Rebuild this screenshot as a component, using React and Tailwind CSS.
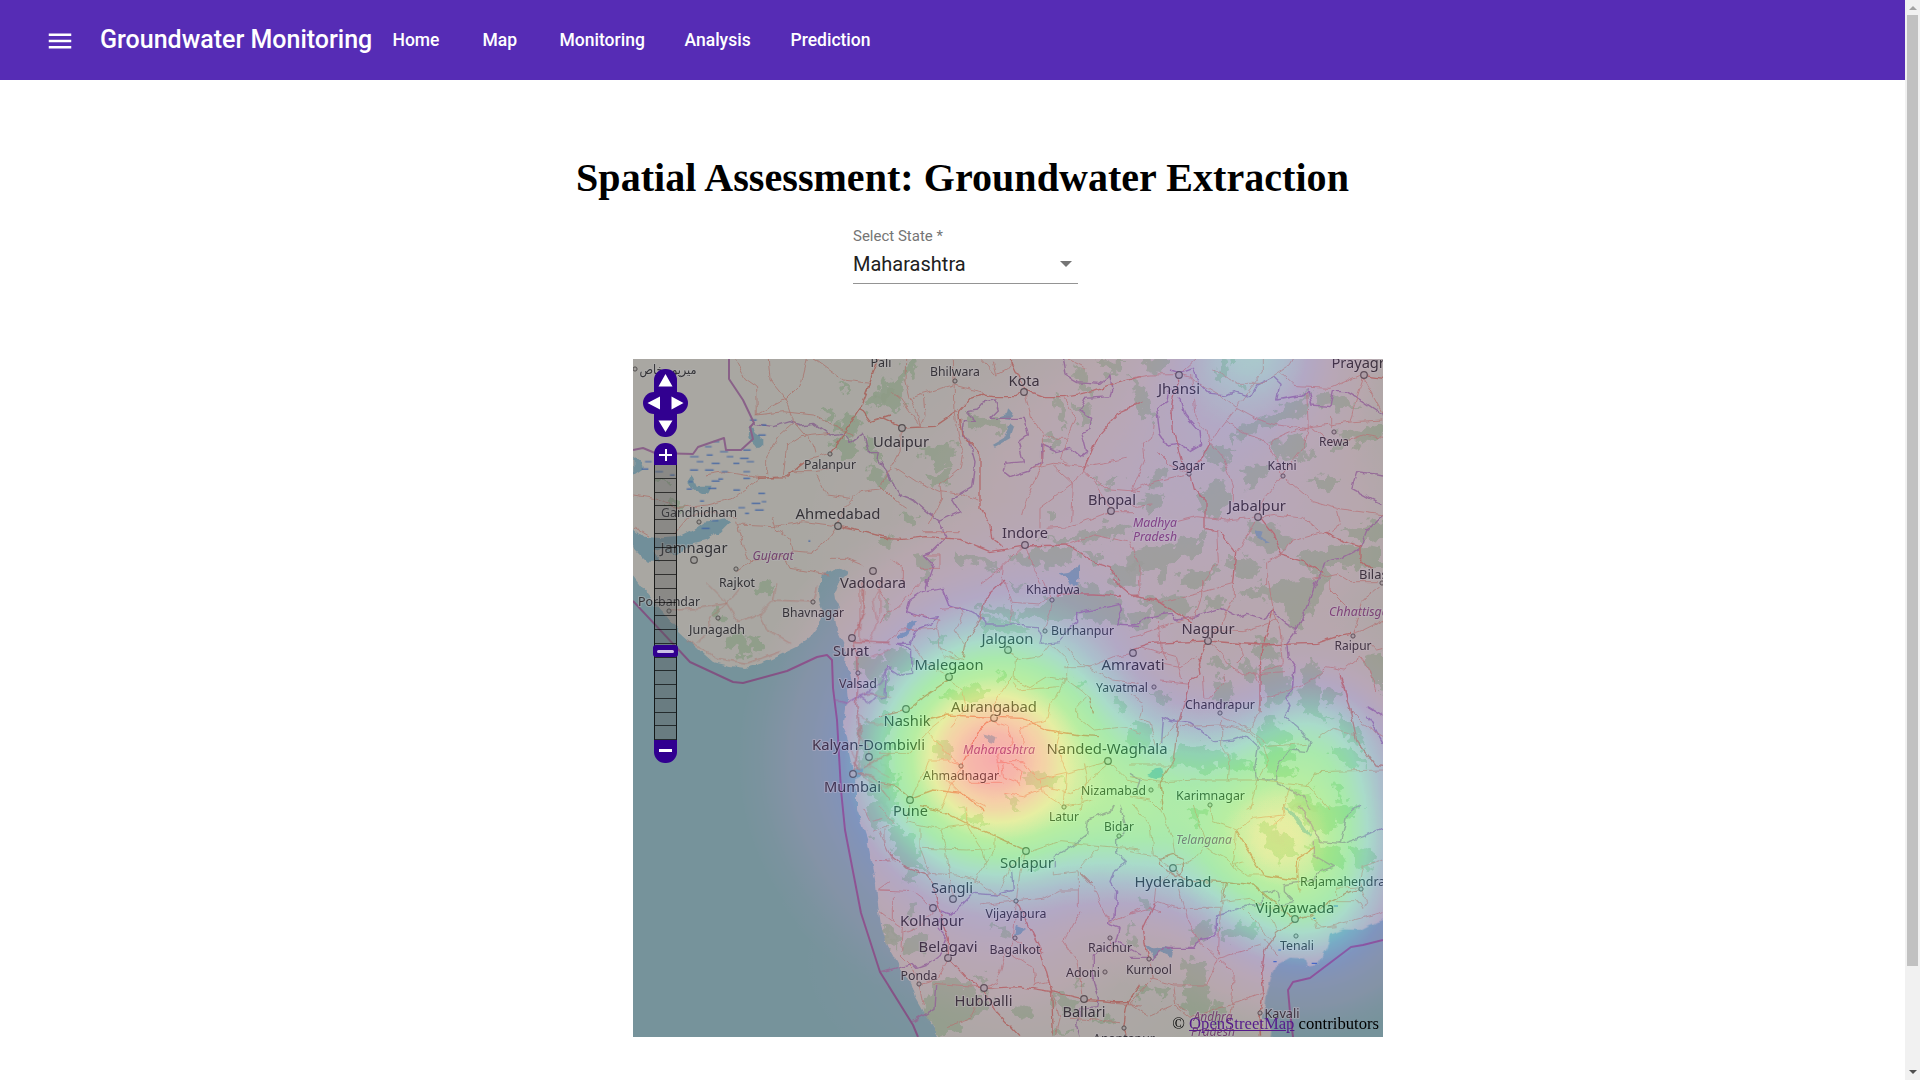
import React from "react";

const NAV = [
  ["Home", "w-[90px]"],
  ["Map", "w-[77px]"],
  ["Monitoring", "w-[125px]"],
  ["Analysis", "w-[106px]"],
  ["Prediction", "w-[90px]"],
];

/* name, centre x, baseline y, width, marker x, marker y */
const CITIES = [
  ["Udaipur", 901, 446.5, 56, 902, 428],
  ["Ahmedabad", 838, 519, 85, 838, 526],
  ["Jamnagar", 694, 553, 67, 694, 560],
  ["Vadodara", 873, 588, 66, 873, 571],
  ["Surat", 851, 656, 36, 852, 638],
  ["Kalyan-Dombivli", 868.5, 750, 113, 869, 757],
  ["Mumbai", 852.5, 792, 57, 853, 774],
  ["Kota", 1024, 385.5, 31, 1024, 392],
  ["Bhopal", 1112, 505, 48, 1111, 511],
  ["Indore", 1025, 538, 46, 1025, 545],
  ["Jhansi", 1179, 394, 42, 1179, 375],
  ["Prayagraj", 1364, 368, 65, 1364, 375],
  ["Jabalpur", 1257, 511, 58, 1258, 517],
  ["Jalgaon", 1007.5, 644, 52, 1008, 650],
  ["Malegaon", 949, 670, 69, 949, 677],
  ["Amravati", 1133, 670, 63, 1133, 653],
  ["Aurangabad", 994, 712, 86, 994, 718],
  ["Nashik", 907, 726, 47, 906, 709],
  ["Nanded-Waghala", 1107, 754, 121, 1108, 761],
  ["Pune", 910.5, 816, 35, 910, 800],
  ["Nagpur", 1208, 634, 53, 1208, 641],
  ["Solapur", 1027, 868, 54, 1026, 851],
  ["Sangli", 952, 893, 42, 953, 899],
  ["Kolhapur", 932, 926, 64, 933, 908],
  ["Belagavi", 948, 952, 59, 948, 958],
  ["Hubballi", 983.5, 1006, 58, 984, 988],
  ["Ballari", 1084, 1017, 43, 1084, 999],
  ["Hyderabad", 1173, 887, 77, 1173, 868],
  ["Vijayawada", 1295, 913, 79, 1295, 919],
];

const TOWNS = [
  ["ميرپور خاص", 668, 374, 57, 635, 369],
  ["Pali", 881, 367, 21, 881, 350],
  ["Palanpur", 830, 469, 52, 830, 454],
  ["Gandhidham", 699, 517, 76, 699, 522],
  ["Rajkot", 737, 587, 36, 736, 569],
  ["Porbandar", 669, 606, 62, 669, 611],
  ["Junagadh", 717, 634, 56, 718, 618],
  ["Bhavnagar", 813, 617, 62, 813, 602],
  ["Valsad", 858, 688, 38, 858, 673],
  ["Bhilwara", 955, 376, 50, 955, 381],
  ["Rewa", 1334, 445.5, 30, 1334, 432],
  ["Sagar", 1188.5, 470, 33, 1189, 474],
  ["Katni", 1282, 470, 29, 1283, 476],
  ["Bilaspur", 1384, 579, 50, 1382, 583],
  ["Khandwa", 1053, 594, 54, 1052, 600],
  ["Burhanpur", 1082.5, 635, 63, 1045, 631],
  ["Yavatmal", 1122, 691.5, 52, 1154, 687],
  ["Ahmadnagar", 961, 780, 76, 961, 766],
  ["Nizamabad", 1113.5, 795, 65, 1151, 790],
  ["Latur", 1064, 821, 30, 1064, 807],
  ["Raipur", 1353, 650, 37, 1353, 636],
  ["Chandrapur", 1220, 709, 70, 1220, 713],
  ["Karimnagar", 1210.5, 800, 69, 1210, 805],
  ["Bidar", 1119, 831, 30, 1119, 836],
  ["Vijayapura", 1016, 918, 61, 1016, 901],
  ["Bagalkot", 1015, 954, 51, 1015, 938],
  ["Raichur", 1110, 952, 44, 1110, 938],
  ["Adoni", 1083, 977, 34, 1105, 972],
  ["Kurnool", 1149, 974, 46, 1149, 959],
  ["Ponda", 919, 980, 37, 919, 984],
  ["Anantapur", 1124, 1043, 62, 1124, 1028],
  ["Rajamahendravaram", 1361, 886, 122, 1361, 889],
  ["Tenali", 1297, 950, 34, 1296, 936],
  ["Kavali", 1282, 1018, 35, 1260, 1013],
];

const STATES = [
  ["Gujarat", 773, 560, 41],
  ["Madhya", 1155, 527, 44],
  ["Pradesh", 1155, 541, 44],
  ["Maharashtra", 999, 754, 72],
  ["Chhattisgarh", 1365, 616, 72],
  ["Telangana", 1204, 844, 56],
  ["Andhra", 1213, 1021, 39],
  ["Pradesh", 1213, 1036, 44],
];

/* Each sheet is drawn at three units per pixel from its own origin. */
const SHEETS = [
  {
    x: 630, y: 355,
    green: "M760 60 L790 120 L720 165 L700 160 L740 110Z M650 175 L690 200 L670 240 L620 230Z M610 245 L650 250 L690 280 L650 320 L610 290Z M700 250 L740 270 L760 330 L730 300Z M580 160 L610 170 L600 200Z M640 90 L655 95 L650 115Z M715 330 L770 360 L760 400 L715 370Z M70 380 L110 380 L95 392Z M120 440 L170 445 L140 460Z M750 560 L780 540 L780 580Z",
    water: "M10 520 L40 545 L100 550 L150 545 L190 525 L225 500 L290 490 L300 500 L270 530 L230 555 L190 565 L160 590 L130 600 L100 580 L70 590 L90 620 L50 620 L10 580Z M185 360 L200 395 L245 395 L235 415 L215 420 L180 400 L172 380Z M360 210 L375 235 L400 255 L400 275 L380 280 L355 245Z M10 300 L35 320 L40 345 L10 365Z",
    roads: "M315 10 L345 70 L380 95 L382 180 M415 10 L420 75 L465 130 L490 200 L550 270 L555 290 M380 180 L430 150 L470 130 L510 90 L530 10 M382 180 L460 170 L550 180 L670 240 M550 10 L640 75 L720 85 M410 360 L410 300 L450 240 L490 205 M460 360 L470 270 L510 245 L600 235 M10 515 L60 545 M10 420 L70 430 L150 460 L230 450 L310 430 L390 370 L470 370 L520 320 L600 295 M225 360 L280 350 L400 370 M320 500 L340 580 L360 620 L320 650 M320 510 L430 515 L520 500 L620 512 M480 590 L540 595 L590 560 L620 515 M430 490 L440 525 L480 550 L490 590 M620 515 L640 460 L690 410 L760 400 M560 360 L590 420 L660 430 M480 350 L560 350 L600 340 M640 520 L700 530 L780 550 M130 540 L180 480 L250 470 L320 490 M600 610 L650 610 L700 630 M360 620 L460 600 L480 640 L600 660",
    main: "M600 295 L640 240 L690 160 L740 30 L745 10 M690 160 L720 200 L780 180 M620 512 L720 535 L780 550 M380 370 L470 365 L520 325",
    border: "M370 205 L430 215 L480 200 L510 210 L550 205 L600 240 L640 235 L660 265 L700 235 L715 290 L745 290 L740 320 L770 350 L780 380",
    marsh: "M360 195h20 M395 210h14 M385 240h22 M250 260h18 M225 275h20 M270 290h24 M340 285h22 M180 305h26 M230 300h18 M290 305h20 M330 310h26 M200 320h20 M245 325h24 M310 325h18 M350 320h22 M180 345h24 M225 345h26 M275 350h18 M340 350h20 M45 320h20 M85 320h16 M35 342h20 M75 350h24 M120 360h14 M340 370h20 M175 380h14 M245 378h24 M265 372h14 M170 402h16 M235 400h24 M310 405h20 M385 415h20 M395 440h14 M365 445h26 M325 458h20 M375 465h26 M210 438h12 M345 475h12 M245 497h20 M215 520h24 M535 558h6",
  },
  {
    x: 880, y: 355,
    green: "M60 40 L110 12 L70 100 L60 165 L0 150 L0 110 L50 90Z M120 290 L180 280 L220 260 L225 300 L200 340 L150 320Z M150 360 L210 340 L200 380 L160 390Z M250 170 L380 205 L370 235 L280 210Z M60 490 L110 480 L100 520Z M585 30 L620 60 L640 130 L610 110 L585 80Z M640 10 L740 15 L700 60Z M525 130 L550 150 L560 210 L540 180Z M590 150 L630 160 L630 220 L600 210Z M380 610 L480 580 L600 590 L560 630 L430 630Z M470 560 L600 540 L690 510 L760 530 L640 560Z M650 380 L720 370 L690 400Z M220 590 L300 610 L350 640 L240 620Z M500 480 L520 470 L510 500Z M490 240 L540 265 L520 280Z M100 600 L150 610 L140 680 L110 650Z M620 590 L670 600 L640 625Z M690 640 L780 620 L780 690 L700 690Z",
    water: "M385 160 L398 175 L390 195 L350 190 L380 180Z M390 205 L402 215 L390 250 L345 275 L335 270 L370 250 L382 225Z M600 625 L600 670 L570 690 L560 670 L535 655 L570 650Z",
    roads: "M80 12 L78 80 L90 130 L130 115 L220 90 M90 130 L110 170 L120 210 M130 120 L135 180 L120 210 M40 115 L60 130 L120 215 M220 10 L225 170 M225 90 L300 110 L310 125 M65 220 L60 290 L40 330 L0 390 M50 340 L110 380 L180 410 L250 420 L295 435 M225 170 L235 240 L250 290 L240 340 L180 390 L185 430 L145 510 M435 115 L455 190 L490 235 L490 270 L480 340 L440 430 L425 480 M550 125 L585 190 L560 250 L530 250 L490 235 M560 255 L545 310 L560 325 M455 340 L520 325 L610 335 L740 310 M520 330 L580 385 L480 460 L480 520 M580 385 L575 500 M610 340 L580 385 M610 345 L670 400 L780 410 M340 20 L350 60 L380 45 L400 20 M500 520 L570 515 L690 470 M435 570 L460 640 L480 690 M435 570 L370 630 L365 690 M370 635 L300 690 M0 390 L50 440 L80 460 M30 610 L70 640 L70 690 M140 600 L180 600 L180 640 L120 640 M560 570 L640 540 L740 560 M640 380 L700 470 L760 470 M130 530 L240 530 M300 10 L345 60 M560 10 L620 40",
    main: "M235 170 L270 130 L310 120 L340 125 L405 125 L435 105 L490 125 L550 125 L640 110 L710 85 L780 65 M390 10 L435 105 M235 170 L245 235 L300 300 L300 460 L330 510 L335 550 L365 575 M0 550 L70 553 L140 545 L240 553 L330 590 L435 573 L560 570 L640 620 L690 635 L720 680 M65 219 L165 214 L230 170 M790 140 L720 170 L650 250 L610 345 M0 185 L65 215",
    border: "M260 170 L290 165 L310 140 L345 135 L355 165 L330 190 L430 190 L442 240 L415 260 L430 320 L375 325 L370 350 L390 365 L450 345 L485 320 L485 270 L530 290 L570 280 L600 305 L620 290 L605 230 L630 220 L635 190 L600 165 L615 130 L690 125 L695 100 L690 60 L660 85 L590 80 L555 60 L548 12 M260 170 L290 200 L250 200 L245 240 L265 250 L285 320 L275 395 L215 430 L240 470 L175 500 L200 545 L155 590 L130 600 L160 630 L140 690 M0 320 L30 370 L60 420 L100 435 L140 470 L180 500",
    marsh: "",
  },
  {
    x: 1130, y: 355,
    green: "M0 70 L50 100 L70 200 L40 180 L10 110Z M40 12 L110 12 L90 60 L60 50Z M285 12 L300 20 L280 70 L260 60Z M310 230 L400 190 L520 130 L540 110 L520 170 L400 220 L300 270Z M240 270 L310 290 L290 330 L230 310Z M340 340 L420 330 L400 380 L350 410Z M210 400 L280 380 L300 440 L230 490 L200 460Z M420 270 L520 235 L520 290 L440 310Z M560 130 L640 120 L690 150 L580 160Z M640 230 L760 210 L760 235 L600 290Z M500 290 L560 300 L510 320Z M60 350 L110 340 L100 390 L60 400Z M20 440 L100 420 L60 470Z M360 500 L440 520 L480 570 L420 590 L370 560Z M330 80 L360 90 L350 110Z M520 380 L620 370 L600 410Z M0 590 L120 570 L220 540 L200 600 L60 640 L0 650Z M500 600 L620 570 L760 590 L760 640 L600 630 L590 680 L540 640Z M280 620 L340 600 L400 640 L340 680Z M60 640 L120 630 L100 680Z M640 520 L760 500 L760 540 L680 560Z M150 660 L260 640 L230 690 L150 690Z",
    water: "M375 525 L395 530 L390 545 L420 560 L405 562 L378 545Z",
    roads: "M0 70 L60 60 L147 59 M147 59 L200 10 M185 60 L190 120 L195 190 L230 225 L240 265 M147 59 L185 70 L270 120 L320 160 L375 190 L440 210 L530 220 L670 200 L760 195 M400 12 L400 50 L320 155 L270 220 L240 265 M240 265 L280 310 L310 390 L310 440 M285 200 L350 240 L400 255 L440 310 L455 360 M530 110 L535 220 L520 280 L455 360 M250 45 L320 85 L395 85 L480 30 L490 12 M450 50 L500 95 L600 100 L690 60 M420 270 L430 255 L500 225 L535 220 M540 215 L600 260 L630 265 L700 240 L760 250 M700 70 L670 160 L660 200 M700 70 L760 180 M605 180 L605 220 M70 200 L65 250 L40 270 L45 310 L5 410 M85 295 L120 330 L180 355 L70 380 L0 410 M455 365 L405 430 L385 480 M465 370 L550 440 L620 460 L760 480 M620 460 L630 500 L610 535 M385 490 L440 480 L520 490 L570 530 M140 500 L200 485 L290 495 L385 485 M375 500 L340 560 L320 595 M225 525 L260 530 L265 620 L220 680 L215 690 M455 600 L480 560 L570 535 L600 530 M455 600 L410 620 L410 690 M0 560 L30 640 L30 690 M550 670 L620 655 L660 680 L740 680 M0 455 L70 450",
    main: "M147 59 L125 150 L130 230 L155 320 L180 360 L190 400 L225 440 L225 520 L270 530 L320 595 L310 690 M240 265 L215 310 L180 355 M390 490 L430 540 L455 600 L520 620 L580 655 M690 60 L760 70 M580 530 L640 560 L690 575 L690 610 L725 640",
    border: "M120 45 L150 55 L190 40 L205 80 L240 115 L290 120 L310 110 L360 125 L380 90 L430 65 L450 85 L440 135 L520 120 L535 105 L545 150 L600 155 L610 110 L650 110 L700 140 L760 180 M150 130 L165 180 L210 230 L215 270 L180 290 L140 265 L110 270 L90 240 L80 160 L110 140 L120 100 M760 360 L680 350 L665 400 L720 430 L760 450 M760 475 L710 530 L690 580 L630 610 L585 620 L560 690",
    marsh: "",
  },
  {
    x: 630, y: 580,
    green: "M280 170 L320 160 L390 190 L380 215 L330 225 L300 200Z M265 100 L288 105 L280 125 L265 120Z M380 20 L430 10 L400 40Z M670 260 L700 220 L780 240 L740 300Z M770 290 L780 270 L780 350 L750 320Z M690 430 L780 400 L780 690 L720 640 L690 560Z M750 70 L780 50 L780 120Z",
    water: "M665 570 L700 565 L690 590 L670 600Z",
    roads: "M117 92 L200 85 L290 70 L230 10 M290 70 L340 10 M290 70 L325 125 L390 100 L430 60 L548 66 M290 70 L240 110 L230 160 L200 190 M390 100 L410 150 L480 190 M430 60 L440 10 M548 66 L560 20 M170 180 L260 235 L350 250 L450 215 M690 0 L690 180 M750 0 L750 100 L720 180 M690 180 L780 190 M720 230 L780 210 M700 340 L780 350 M680 400 L720 430 L780 440 M690 470 L720 520 L717 560 L780 590 M690 580 L740 620 L780 620 M650 490 L690 560 M760 0 L730 60 L740 120",
    main: "M665 174 L680 230 L683 300 L680 370 L690 460 L680 530 L669 583 M665 185 L780 187 M700 560 L740 540 L780 520 M680 580 L730 590 L780 660 M700 0 L700 100 L675 170 M670 550 L690 570",
    border: "M618 362 L650 370 L680 350 L720 340 L740 350 L720 370 L690 350 L750 310 L780 260",
    marsh: "",
  },
  {
    x: 880, y: 580,
    green: "M300 80 L380 75 L400 110 L320 105Z M310 120 L430 130 L450 160 L330 150Z M400 110 L500 60 L560 30 L620 20 L720 50 L740 120 L660 130 L600 100 L500 120Z M10 210 L80 200 L100 260 L40 280Z M0 290 L30 300 L20 350 L0 360Z M190 350 L260 320 L330 330 L300 365 L210 360Z M170 480 L220 495 L210 530 L170 520Z M430 590 L480 570 L560 600 L520 620 L440 605Z M700 355 L740 380 L745 400 L710 385Z M370 640 L400 655 L420 690 L390 670Z M0 560 L60 580 L40 690 L0 690Z M360 290 L380 285 L375 310Z M400 10 L430 20 L410 30Z M150 170 L200 180 L160 195Z M590 310 L620 315 L600 330Z",
    water: "M50 165 L75 155 L80 130 L115 120 L100 140 L75 170 L55 175Z M310 460 L330 465 L350 475 L345 490 L325 485Z M570 0 L595 8 L580 18Z",
    roads: "M0 130 L20 100 L60 80 L120 10 M20 185 L60 150 L170 145 L180 120 L130 110 L100 105 M170 145 L180 200 L250 240 M180 85 L240 80 L250 100 L225 150 L260 200 M370 0 L395 70 L480 75 L510 50 L490 0 M395 75 L390 130 M520 60 L510 100 L490 150 M0 30 L30 70 M410 230 L405 300 L450 320 L500 290 L560 300 L630 350 L640 400 M383 215 L420 240 L480 230 L510 190 L560 240 L560 290 L530 350 L510 370 L500 420 M400 310 L415 330 L540 320 M550 260 L630 260 L700 230 L758 220 M560 200 L600 250 L660 280 L700 300 L770 310 M620 350 L590 380 L590 410 L640 450 L740 440 L780 460 M0 520 L90 520 L150 450 L200 410 M206 291 L140 250 L100 190 M206 300 L250 330 L260 380 L210 440 M90 660 L130 580 L145 540 L200 540 L244 557 L270 610 L370 610 M145 460 L190 510 L240 555 M245 560 L210 620 L180 690 M343 415 L340 370 L380 310 L400 290 M343 425 L380 440 L400 490 L350 530 L360 590 M350 545 L430 545 L470 600 L560 580 L683 545 M360 540 L430 575 L420 610 L370 590 L365 550 M430 490 L420 440 L500 420 M370 640 L430 650 L500 620 L580 640 L683 555 M540 450 L530 500 L560 580 L552 680 M200 600 L240 640 L320 680 M683 545 L740 600 L780 610 M480 600 L490 640 L552 680 L640 660 M610 550 L620 600 L600 690 M180 200 L190 230 L240 240",
    main: "M375 0 L310 60 L300 120 L260 180 L250 230 M0 410 L80 390 L130 350 L206 300 M145 420 L200 405 L343 412 L430 415 L500 450 L600 465 L660 470 M343 412 L290 460 L265 520 L245 555 M90 655 L160 630 L245 640 L310 690 M0 610 L50 620 L90 655 M700 0 L760 50 L780 48 M530 45 L640 45 L720 50 M640 400 L630 350",
    border: "M140 0 L135 30 L90 60 L80 95 L140 115 L175 110 L160 130 L105 150 L90 190 L50 190 L95 210 L95 280 L60 285 L20 260 L15 350 L0 355 M140 35 L190 25 L210 75 L290 100 L320 135 L400 135 L470 140 L485 170 L480 190 L540 185 L550 160 L590 130 L590 100 L720 70 L725 95 L710 135 L780 140",
    marsh: "",
  },
  {
    x: 1130, y: 580,
    green: "M30 60 L150 40 L190 90 L120 110 L50 90Z M0 110 L60 100 L40 140 L0 140Z M240 50 L300 60 L280 80 L220 80Z M330 40 L430 10 L530 0 L590 0 L560 70 L500 150 L470 110 L440 60Z M380 170 L440 190 L450 230 L400 240 L370 220Z M410 240 L470 270 L480 330 L430 380 L395 330Z M530 240 L560 260 L570 320 L550 390 L600 420 L520 400 L510 330Z M260 300 L300 290 L310 350 L270 380 L250 340Z M570 350 L600 330 L620 350 L600 380Z M60 340 L130 350 L110 370Z M410 420 L470 440 L480 480 L390 490 L380 440Z M120 510 L220 500 L300 520 L370 560 L300 570 L180 560 L120 550Z M400 500 L500 510 L460 560 L500 580 L420 590Z M0 430 L60 440 L40 510 L0 500Z M480 630 L540 640 L560 690 L490 690Z M600 500 L680 520 L720 560 L650 560Z M700 230 L760 220 L760 340 L720 290Z M620 410 L670 430 L700 500 L640 470Z M600 600 L640 620 L630 660Z M240 240 L300 250 L260 270Z M340 250 L390 270 L350 300Z",
    water: "M55 585 L75 565 L100 562 L105 590 L80 595 L65 590Z",
    roads: "M25 0 L30 45 M0 45 L100 65 L220 35 L310 10 M215 0 L215 50 L195 110 M310 0 L310 50 L275 130 L234 183 M415 0 L430 90 L450 150 L460 250 L390 275 M0 170 L70 150 L190 110 M85 125 L90 200 L110 240 M100 250 L150 260 L200 230 M30 200 L140 230 L155 300 M234 183 L275 220 L290 250 L340 285 L460 275 M330 190 L340 230 L320 250 M90 300 L180 310 M370 280 L385 310 M280 280 L285 300 L230 360 M600 0 L600 30 L660 90 M760 120 L700 150 L672 160 L700 60 L750 20 M395 355 L480 330 L550 295 L590 260 L640 270 L690 230 M690 230 L720 270 L740 330 M630 290 L660 390 L700 430 L760 470 M565 475 L610 445 L680 465 M150 440 L270 435 L360 455 L400 500 L530 490 M275 420 L275 500 L300 540 L295 600 M390 360 L385 400 L360 450 M275 410 L360 450 L410 490 M400 500 L415 540 L380 600 M0 555 L130 555 M0 590 L100 605 L200 600 L380 600 L540 620 L600 690 M530 620 L560 575 L760 570 M40 380 L30 420 L60 430 L80 500 L140 430 M0 340 L40 370 M0 650 L60 660 L90 690 M360 690 L380 605 M480 620 L460 690 M220 150 L340 155 L440 120 M720 190 L740 210 L760 205 M220 290 L225 360",
    main: "M20 50 L90 65 L140 100 L180 125 M0 210 L60 190 L234 183 L390 195 L560 190 L620 170 L660 160 M234 183 L205 250 L210 285 L180 300 L165 360 L145 430 L130 540 L90 610 L100 690 M390 275 L390 400 M430 90 L395 210 L390 275 M630 280 L660 390 L680 480 L735 555 L760 560",
    border: "M0 135 L30 130 L60 110 L120 100 L140 120 L200 110 L270 85 L320 110 L350 100 L400 115 L430 95 L470 130 L500 150 L530 80 L560 0 M500 150 L470 190 L475 230 L495 260 L490 330 L465 350 L480 380 L465 410 L500 440 L540 485 L530 515 L480 510 L440 560 L440 600 L380 600 L375 560 L385 500 L350 465 L310 480 L255 485 L220 455 L180 430 L120 420 L100 410 L95 490 M0 580 L30 600 L20 630 M710 380 L760 410 M715 410 L760 490 M440 610 L520 650 L540 690",
    marsh: "",
  },
  {
    x: 630, y: 805,
    green: "M710 0 L780 0 L780 60 L730 55Z M710 90 L730 95 L725 110Z M760 370 L790 380 L780 430Z",
    water: "",
    roads: "M700 10 L720 50 L760 40 M730 80 L760 65 L780 65 M765 70 L765 120 L780 150 M735 170 L780 168 M745 255 L780 230 M745 255 L780 255",
    main: "",
    border: "M752 500 L780 492",
    marsh: "",
  },
  {
    x: 880, y: 805,
    green: "M30 60 L100 90 L130 190 L80 190 L40 140Z M60 200 L100 210 L95 240Z M70 400 L130 380 L140 440 L80 440Z M80 310 L110 300 L100 350Z M170 530 L230 520 L310 590 L320 620 L260 640 L200 695 L180 695 L130 610Z M240 15 L300 30 L320 60 L290 55Z M330 370 L380 365 L390 385Z M420 600 L460 620 L440 640 L400 610Z M310 560 L330 570 L350 600Z M280 510 L310 515 L320 550Z M440 190 L500 190 L480 200Z M520 570 L580 580 L600 640 L540 620Z M520 660 L570 690 L520 690Z M740 400 L770 410 L750 430Z M60 530 L90 540 L80 560Z M640 640 L700 650 L660 670Z M20 370 L50 400 L40 440Z M590 520 L600 540 L585 545Z",
    water: "M410 362 L430 370 L442 375 L420 385 L405 390Z",
    roads: "M90 0 L80 50 L120 60 L180 70 L260 60 L345 90 M120 70 L120 130 L150 210 M130 130 L260 135 L345 130 M0 0 L40 60 M180 75 L200 140 L210 210 L218 283 M345 85 L345 130 L300 200 L280 230 M150 205 L230 210 L300 230 L340 265 L409 287 M260 10 L260 60 L310 140 L320 190 M439 137 L420 200 L410 280 M440 140 L390 190 L360 260 M450 140 L540 110 L640 120 L780 135 M520 200 L520 210 L595 200 M595 200 L595 310 M660 120 L600 190 M409 287 L490 280 L540 255 L595 255 M300 300 L409 287 L400 400 L440 430 L490 440 M600 320 L550 410 L590 470 L612 583 M598 200 L640 250 L690 350 M690 355 L780 310 M690 399 L700 440 M0 170 L30 165 M0 80 L20 130 L40 170 M0 255 L100 260 L140 290 L158 309 M40 270 L40 350 L70 370 L65 440 M158 320 L110 370 L70 385 M405 400 L370 460 L350 530 L312 550 M400 450 L460 490 L465 540 M200 470 L170 520 L117 538 L100 490 L60 450 M117 538 L130 600 M160 535 L230 540 L300 545 M570 640 L720 650 M200 665 L270 640 L300 580 M520 570 L540 640 L530 690 M640 585 L780 600 M460 540 L500 530 M150 300 L158 309 M0 320 L40 350",
    main: "M120 5 L190 20 L270 60 L380 110 L439 137 M30 150 L80 190 L145 210 L165 260 L190 360 L205 400 L205 455 M205 460 L260 520 L312 550 L340 610 L420 695 M409 290 L440 350 L480 430 L515 560 L520 690 M312 550 L420 545 L515 560 L612 583 L700 590 L745 590 M780 540 L740 600 L731 669 L740 695 M600 200 L640 240",
    border: "M395 200 L400 255 L350 270 L280 265 L240 305 L210 330 L180 320 M180 335 L175 370 L200 400 L180 450 L140 480 L110 490 L95 475 L10 500 M170 540 L165 610 L100 650 M520 190 L520 155 L580 120 L620 90 L625 45 L690 20 L700 0 M720 0 L740 70 L710 100 L710 140 L740 170 L700 200 L690 230 L710 260 L705 340 L680 355 L720 370 L710 410 L640 450 L640 530 L655 580 L650 605 L600 610 L590 660 L600 695 M710 410 L780 450",
    marsh: "",
  },
  {
    x: 1130, y: 805,
    green: "M390 60 L430 50 L450 90 L490 110 L500 150 L440 170 L410 130Z M480 0 L520 40 L550 90 L620 60 L700 0Z M540 120 L620 130 L640 180 L560 190Z M660 120 L730 150 L720 200 L670 180Z M180 370 L260 350 L250 400 L190 410Z M270 380 L380 350 L390 380 L290 410Z M30 280 L60 290 L50 310Z M150 460 L220 470 L240 580 L200 640 L160 600 L180 540Z M240 590 L290 600 L280 650 L230 640Z M70 540 L110 550 L90 590Z M0 350 L20 360 L0 380Z M180 10 L230 20 L200 60Z M40 540 L60 550 L20 580Z",
    water: "M45 415 L70 430 L105 425 L130 435 L125 455 L90 440 L70 460 L60 440Z M455 0 L500 30 L535 80 L543 95 L520 80 L490 40Z",
    roads: "M10 0 L60 60 L70 150 L128 190 L200 160 L230 120 L190 0 M90 10 L128 100 L135 150 M240 0 L250 50 L320 75 L370 40 L460 30 M320 75 L310 180 L350 210 L400 210 M310 180 L340 170 M230 130 L290 160 L320 200 M128 190 L80 250 L75 290 L140 310 L270 310 L280 290 M0 140 L60 150 L80 155 M280 230 L270 340 L265 450 M140 230 L170 340 L210 410 L265 460 M0 325 L60 310 L90 320 M340 310 L380 350 L410 390 L430 410 M270 290 L360 280 L420 310 L470 300 M265 460 L395 420 M265 460 L230 540 L130 540 L60 520 M270 465 L310 500 L305 600 L295 650 M135 545 L140 600 L170 620 M305 600 L395 565 M60 470 L70 520 L0 595 L50 630 M60 630 L130 600 L180 640 L260 610 L300 600 M460 0 L465 30 L430 60 M530 330 L580 370 L690 340 L760 320 M555 340 L560 370 L620 365 M600 290 L690 290 L700 310 M694 253 L710 290 L700 310 M620 290 L620 250 L700 245 M700 180 L690 220 L700 250 M760 165 L700 185 M400 400 L440 450 M390 625 L390 695 M510 160 L500 200 L510 260 M350 10 L370 0 M440 380 L420 330 L430 310",
    main: "M128 190 L160 225 L290 230 L370 240 L430 290 L495 343 M280 280 L290 230 M495 343 L440 385 L405 430 L395 500 L400 560 L390 625 L395 695 M495 343 L540 330 L600 290 L660 260 L694 253 M75 295 L40 370 L45 410 L57 463 M90 160 L130 148 L160 160 L160 200 L140 215 L115 200 L92 180Z M320 80 L400 210 L495 225 L500 160 L550 130",
    border: "M760 68 L700 95 L640 115 L570 110 L545 60 L525 30 L505 0 M550 110 L550 150 L610 185 L570 200 L550 225 L460 240 L460 260 L490 290 L450 300 L440 255 L400 265 L400 300 L360 300 L260 330 L258 395 L205 405 L190 430 L100 430 L65 460 L0 460 M630 115 L640 80 L650 30 L690 0",
    marsh: "M610 303h14 M550 340h6 M430 470h10 M545 475h16 M445 435h8",
  },
];

function Basemap() {
  return (
    <g>
      <rect x="620" y="350" width="780" height="700" fill="#f2efe9" />
      <g filter="url(#rough)">
        {SHEETS.map((s, i) => (
          <g key={i} transform={`translate(${s.x} ${s.y}) scale(0.33333)`}>
            <path d={s.green} fill="#c9e0c0" stroke="#c9e0c0" strokeWidth="4" strokeLinejoin="round" opacity="0.85" />
          </g>
        ))}
      </g>
      <g filter="url(#jagged)">
        <path
          d="M620 560 L633 575 L650 597 L663 612 L680 633 L697 648 L713 662 L730 666 L745 668 L763 663 L780 655 L797 647 L810 637 L817 628 L823 613 L819 600 L818 590 L822 583 L822 577 L827 572 L838 568 L848 573 L842 579 L837 585 L834 593 L835 600 L840 607 L835 617 L837 630 L843 643 L847 652 L843 660 L850 673 L852 683 L847 690 L848 700 L845 710 L843 723 L847 737 L849 753 L852 767 L855 780 L857 793 L857 810 L860 818 L868 842 L871 862 L876 885 L878 905 L881 925 L887 945 L893 955 L900 968 L910 982 L915 998 L923 1012 L933 1025 L944 1050 L620 1050Z"
          fill="#aad3df"
        />
        <g transform="translate(1130 805) scale(0.33333)">
          <path d="M800 335 L760 345 L720 360 L690 375 L640 373 L600 390 L590 430 L560 480 L530 485 L520 460 L480 458 L440 480 L425 510 L410 570 L400 640 L425 660 L420 730 L800 730Z" fill="#aad3df" />
        </g>
      </g>
      <g filter="url(#jagged)" fill="none" strokeLinejoin="round">
        {SHEETS.map((s, i) => (
          <g key={i} transform={`translate(${s.x} ${s.y}) scale(0.33333)`}>
            <path d={s.water} fill="#a3cddd" />
            <path d={s.border} stroke="#c79ccd" strokeWidth="4.2" />
            <path d={s.roads} stroke="#f4aca2" strokeWidth="3" opacity="0.85" />
            <path d={s.main} stroke="#f09a8e" strokeWidth="4" />
          </g>
        ))}
      </g>
      {SHEETS.map((s, i) => (
        <g key={i} transform={`translate(${s.x} ${s.y}) scale(0.33333)`}>
          <path d={s.marsh} stroke="#5b8fea" strokeWidth="3.4" fill="none" />
        </g>
      ))}
      <g fill="none" stroke="#b878ba" strokeWidth="2" strokeLinejoin="round">
        <path d="M633 601 L690 662 L733 682 L743 683 L787 671 L817 657 L827 655 L832 660 L833 688 L837 720 L841 790 L845 830 L861 913 L880 972 L913 1025 L918 1037" />
        <path d="M1383 940 L1363 945 L1351 947 L1310 978 L1293 982 L1288 990 L1290 1012 L1293 1037" />
        <path stroke="#c68cc4" d="M633 450 L643 448 L655 453 L693 454 L698 447 L724 438 L726 450 L741 450 L753 439 L750 427 L754 423 L743 400 L729 379 L729 359" />
      </g>
    </g>
  );
}

function Labels() {
  return (
    <g fontFamily="'Noto Sans', 'DejaVu Sans', sans-serif" textAnchor="middle" fill="#4b4a4f">
      {CITIES.map(([n, , , , mx, my]) => (
        <circle key={n} cx={mx} cy={my} r="3.3" fill="#e6e2de" stroke="#75716f" strokeWidth="1.2" />
      ))}
      {TOWNS.map(([n, , , , mx, my]) => (
        <circle key={n} cx={mx} cy={my} r="2.1" fill="#e6e2de" stroke="#75716f" strokeWidth="1" />
      ))}
      <g stroke="#ffffff" strokeOpacity="0.5" strokeWidth="2.2" strokeLinejoin="round" paintOrder="stroke">
        {CITIES.map(([n, x, y, w]) => (
          <text key={n} x={x} y={y} textLength={w} lengthAdjust="spacingAndGlyphs" fontSize="15">{n}</text>
        ))}
        {TOWNS.map(([n, x, y, w]) => (
          <text key={n} x={x} y={y} textLength={w} lengthAdjust="spacingAndGlyphs" fontSize="12.5">{n}</text>
        ))}
        <g fill="#a5609f" fontStyle="italic" fontSize="12.5">
          {STATES.map(([n, x, y, w], i) => (
            <text key={i} x={x} y={y} textLength={w} lengthAdjust="spacingAndGlyphs">{n}</text>
          ))}
        </g>
      </g>
    </g>
  );
}

/* cx, cy, rx, ry, peak */
const HEAT = [
  [1080, 560, 330, 330, 0.13],
  [1190, 450, 260, 230, 0.18],
  [1010, 960, 260, 170, 0.09],
  [1300, 540, 220, 240, 0.1],
  [1255, 345, 165, 150, 0.38],
  [994, 759, 262, 258, 0.99],
  [1278, 838, 225, 205, 0.78],
  [1135, 805, 170, 150, 0.42],
  [1315, 745, 165, 150, 0.36],
  [1315, 915, 150, 135, 0.26],
];

function Heat() {
  return (
    <g opacity="0.3">
      <g filter="url(#palette)">
        <rect x="633" y="359" width="750" height="678" fill="#000" />
        {HEAT.map(([cx, cy, rx, ry, p], i) => (
          <ellipse key={i} cx={cx} cy={cy} rx={rx} ry={ry} fill="url(#bell)" opacity={p} />
        ))}
      </g>
    </g>
  );
}

function MapDrawing() {
  return (
    <svg className="block h-[678px] w-[750px]" viewBox="633 359 750 678">
      <defs>
        <radialGradient id="bell">
          <stop offset="0" stopColor="#fff" stopOpacity="1" />
          <stop offset="0.1" stopColor="#fff" stopOpacity="0.965" />
          <stop offset="0.2" stopColor="#fff" stopOpacity="0.865" />
          <stop offset="0.3" stopColor="#fff" stopOpacity="0.72" />
          <stop offset="0.4" stopColor="#fff" stopOpacity="0.56" />
          <stop offset="0.5" stopColor="#fff" stopOpacity="0.4" />
          <stop offset="0.6" stopColor="#fff" stopOpacity="0.27" />
          <stop offset="0.7" stopColor="#fff" stopOpacity="0.17" />
          <stop offset="0.8" stopColor="#fff" stopOpacity="0.09" />
          <stop offset="0.9" stopColor="#fff" stopOpacity="0.035" />
          <stop offset="1" stopColor="#fff" stopOpacity="0" />
        </radialGradient>
        <filter id="palette" filterUnits="userSpaceOnUse" x="633" y="359" width="750" height="678" colorInterpolationFilters="sRGB">
          <feComponentTransfer>
            <feFuncR type="table" tableValues="0 0.18 0.2 0.13 0.03 0 0 0.2 0.8 1 1" />
            <feFuncG type="table" tableValues="0 0 0 0.02 0.32 0.68 0.86 0.92 0.92 0.5 0.03" />
            <feFuncB type="table" tableValues="0 0.15 0.28 0.45 0.55 0.52 0.15 0 0 0.08 0.14" />
          </feComponentTransfer>
        </filter>
        <filter id="rough" filterUnits="userSpaceOnUse" x="620" y="350" width="780" height="700" colorInterpolationFilters="sRGB">
          <feTurbulence type="fractalNoise" baseFrequency="0.09" numOctaves="3" seed="4" result="n" />
          <feDisplacementMap in="SourceGraphic" in2="n" scale="22" xChannelSelector="R" yChannelSelector="G" />
        </filter>
        <filter id="jagged" filterUnits="userSpaceOnUse" x="620" y="350" width="780" height="700" colorInterpolationFilters="sRGB">
          <feTurbulence type="fractalNoise" baseFrequency="0.1" numOctaves="2" seed="9" result="n" />
          <feDisplacementMap in="SourceGraphic" in2="n" scale="6" xChannelSelector="R" yChannelSelector="G" result="d" />
          <feGaussianBlur in="d" stdDeviation="0.35" />
        </filter>
      </defs>
      <Basemap />
      <Labels />
      <Heat />
    </svg>
  );
}

function PanZoom() {
  return (
    <div className="absolute left-[10px] top-[10px] flex w-[45px] flex-col items-center">
      <svg className="h-[68px] w-[45px]" viewBox="0 0 45 68">
        <rect x="11" y="0" width="23" height="68" rx="11" fill="#310090" />
        <rect x="0" y="23" width="45" height="22" rx="11" fill="#310090" />
        <path d="M22.5 5 L29.5 17.5 H15.5Z M22.5 63 L29.5 51.5 H15.5Z M4.5 34 L17 27.5 V40.5Z M40.5 34 L28.5 27.5 V40.5Z" fill="#fff" />
      </svg>
      <div className="relative mt-[6px] flex h-[22px] w-[23px] items-center justify-center rounded-t-[11px] bg-[#310090]">
        <span className="absolute top-[11px] h-[2px] w-[13px] bg-white" />
        <span className="absolute top-[6px] h-[12px] w-[2px] bg-white" />
      </div>
      <div className="relative flex h-[275px] w-[23px] flex-col border-x border-black/80 bg-[#505050]/35">
        {Array.from({ length: 20 }, (_, i) => (
          <span key={i} className="flex-1 border-b-[1.5px] border-black/65" />
        ))}
        <div className="absolute -left-[2px] top-[180px] flex h-[12px] w-[25px] items-center justify-center rounded-[3px] bg-[#310090]">
          <span className="h-[3px] w-[17px] rounded-sm bg-[#cbbfe6]" />
        </div>
      </div>
      <div className="flex h-[23px] w-[23px] justify-center rounded-b-[11px] bg-[#310090] pt-[9px]">
        <span className="h-[3px] w-[13px] bg-white" />
      </div>
    </div>
  );
}

export default function App() {
  return (
    <div className="flex h-[1080px] w-[1920px] overflow-hidden bg-white">
      <div className="flex w-[1905px] flex-col">
        <header className="flex h-20 shrink-0 items-center bg-[#562cb5] font-['Roboto',sans-serif] font-medium text-white">
          <svg className="ml-[45px] mt-[2px] h-[30px] w-[30px]" viewBox="0 0 24 24" fill="currentColor">
            <path d="M3 18h18v-2H3v2zm0-5h18v-2H3v2zm0-7v2h18V6H3z" />
          </svg>
          <span className="ml-[25px] w-[292.5px] whitespace-nowrap text-[25px]">Groundwater Monitoring</span>
          <nav className="flex text-[17.5px]">
            {NAV.map(([n, w]) => (
              <a key={n} className={w}>{n}</a>
            ))}
          </nav>
        </header>
        <main>
          <h1 className="ml-[20px] mt-[75px] text-center font-['Liberation_Serif',serif] text-[40px] font-bold leading-[46px] tracking-[0.05px] text-black">
            Spatial Assessment: Groundwater Extraction
          </h1>
          <div className="ml-[853px] mt-[26px] flex h-[57px] w-[225px] flex-col border-b border-[#949494] font-['Roboto',sans-serif]">
            <label className="text-[15px] leading-[18px] text-[#757575]">Select State *</label>
            <div className="mt-[7px] flex items-center justify-between pr-[6px] text-[20px] leading-[24px] text-[#212121]">
              Maharashtra
              <span className="border-x-[6px] border-t-[6px] border-x-transparent border-t-[#757575]" />
            </div>
          </div>
          <div className="relative ml-[633px] mt-[75px] h-[678px] w-[750px] overflow-hidden">
            <MapDrawing />
            <PanZoom />
            <div className="absolute bottom-[4px] right-[4px] whitespace-nowrap font-['Liberation_Serif',serif] text-[16.65px] leading-[19px] text-black">
              © <a className="text-[#551a8b] underline">OpenStreetMap</a> contributors
            </div>
          </div>
        </main>
      </div>
      <aside className="flex w-[15px] flex-col items-center bg-[#f1f1f1]">
        <span className="mt-[6px] border-x-4 border-b-4 border-x-transparent border-b-[#a3a3a3]" />
        <div className="mt-[5px] h-[951px] w-[11px] bg-[#c1c1c1]" />
        <span className="mb-[6px] mt-auto border-x-4 border-t-4 border-x-transparent border-t-[#505050]" />
      </aside>
    </div>
  );
}
